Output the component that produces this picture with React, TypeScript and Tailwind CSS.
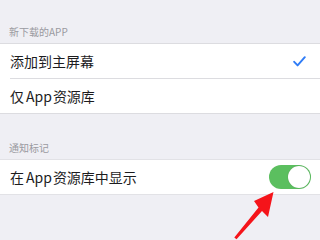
import React from 'react';

const font = { fontFamily: '"Noto Sans CJK SC", "Noto Sans", sans-serif' };

const Toggle = () => (
    <div className="w-[42px] h-[24px] rounded-full bg-[#5bbf5f] flex items-center justify-end p-[1px]">
        <div className="w-[22px] h-[22px] rounded-full bg-white shadow-[0_0_1px_rgba(0,0,0,0.3)]" />
    </div>
);

const Check = () => (
    <svg width="13" height="11" viewBox="0 0 13 11" fill="none">
        <path d="M1.2 5.8 L4.6 9.4 L11.8 1.2" stroke="#2f7cf6" strokeWidth="1.9" strokeLinecap="round" strokeLinejoin="round" />
    </svg>
);

const AppWord = () => <span className="ml-[2px] mr-[1px]">App</span>;

export default function App() {
    return (
        <div className="relative w-[320px] h-[240px] overflow-hidden bg-[#efeff4]" style={font}>
            {/* Section 1 */}
            <div className="h-[43px] flex items-end pl-[9px] pb-[5px]">
                <span className="text-[10px] leading-[12px] text-[#9a9aa0]">新下载的APP</span>
            </div>
            <div className="bg-white border-y border-[#dcdce0]">
                <div className="pl-[10px]">
                    <div className="h-[35px] flex items-center justify-between pr-[14px] border-b border-[#dcdce0]">
                        <span className="text-[14px] text-[#1c1c1e]">添加到主屏幕</span>
                        <Check />
                    </div>
                </div>
                <div className="h-[34px] flex items-center pl-[10px]">
                    <span className="text-[14px] text-[#1c1c1e]">仅<AppWord />资源库</span>
                </div>
            </div>

            {/* Section 2 */}
            <div className="h-[45px] flex items-end pl-[9px] pb-[5px]">
                <span className="text-[10px] leading-[12px] text-[#9a9aa0]">通知标记</span>
            </div>
            <div className="bg-white border-y border-[#e2e2e6]">
                <div className="h-[34px] flex items-center justify-between pl-[10px] pr-[9px]">
                    <span className="text-[14px] text-[#1c1c1e]">在<AppWord />资源库中显示</span>
                    <Toggle />
                </div>
            </div>

            {/* red annotation arrow */}
            <svg className="absolute left-0 top-0" width="320" height="240" viewBox="0 0 320 240">
                <polygon
                    points="273.5,192 268,217 262,211 236.5,239.3 234.3,237.6 258.5,207.5 254,201"
                    fill="#f5141a"
                />
            </svg>
        </div>
    );
}
